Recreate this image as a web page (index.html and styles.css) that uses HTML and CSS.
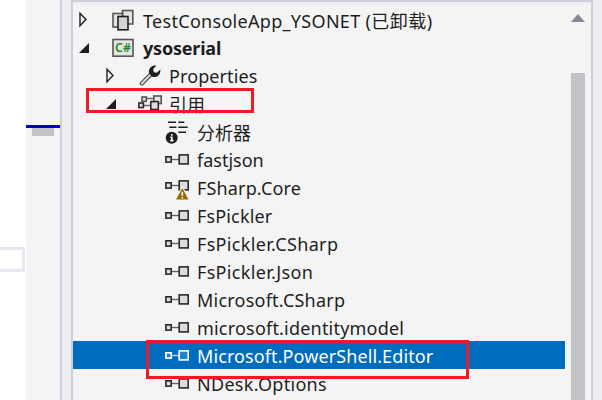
FILE: index.html
```html
<!DOCTYPE html>
<html lang="zh-CN">
<head>
    <meta charset="UTF-8">
    <title>解决方案资源管理器</title>
    <link rel="stylesheet" href="styles.css">
</head>
<body>

    <!-- shared icon -->
    <svg width="0" height="0" class="defs">
        <symbol id="ref" viewBox="0 0 28 28">
            <path class="link" d="M7.5 14.5h8"/>
            <rect class="box" x="1.9" y="11.8" width="5.3" height="5.3"/>
            <rect class="box" x="15.2" y="9.9" width="9" height="9"/>
        </symbol>
    </svg>

    <div class="window">
        <div class="editor"><div class="editor-box"></div></div>
        <div class="strip">
            <div class="caret-line"></div>
            <div class="strip-thumb"></div>
        </div>
        <div class="splitter"></div>

        <div class="panel">
            <div class="tree">
                <div class="row">
                    <svg class="arrow" viewBox="0 0 12 28"><path class="closed" d="M2 8.3v12.5l6-6.2z"/></svg>
                    <svg class="icon" viewBox="0 0 28 28">
                        <rect class="box back" x="12.5" y="5.5" width="10.3" height="13.5"/>
                        <rect class="box back" x="3" y="8.5" width="9.5" height="13.5"/>
                        <rect class="box front" x="8" y="11.5" width="10" height="13.3"/>
                    </svg>
                    <span class="label l-test">TestConsoleApp_YSONET (<span class="cjk">已卸载</span>)</span>
                </div>
                <div class="row">
                    <svg class="arrow" viewBox="0 0 12 28"><path class="open" d="M11 10v10H1z"/></svg>
                    <svg class="icon" viewBox="0 0 28 28">
                        <rect class="box back" x="3" y="6.5" width="20" height="16.7"/>
                        <text class="cs" x="5" y="19.3" textLength="16" lengthAdjust="spacingAndGlyphs">C#</text>
                    </svg>
                    <span class="label l-yso">ysoserial</span>
                </div>
                <div class="row level1">
                    <svg class="arrow" viewBox="0 0 12 28"><path class="closed" d="M2 8.3v12.5l6-6.2z"/></svg>
                    <svg class="icon" viewBox="0 0 28 28">
                        <path class="handle-edge" d="M4.8 22.5L14 13.2"/>
                        <path class="handle" d="M4.8 22.5L14 13.2"/>
                        <path class="head" d="M19.4 4.6a6.3 6.3 0 0 0-7.3 8l3.2 3.2a6.3 6.3 0 0 0 8-7.2l-3.4 3.2-3-.6-.8-3z"/>
                    </svg>
                    <span class="label l-prop">Properties</span>
                </div>
                <div class="row level1">
                    <svg class="arrow" viewBox="0 0 12 28"><path class="open" d="M11 10v10H1z"/></svg>
                    <svg class="icon" viewBox="0 0 28 28">
                        <path class="link" d="M10 9.5h7M7 16.5h7"/>
                        <rect class="box back" x="5" y="8" width="4.3" height="4.3"/>
                        <rect class="box back" x="16.8" y="7" width="7.4" height="7.6"/>
                        <rect class="box" x="1.9" y="14" width="4.5" height="4.6"/>
                        <rect class="box" x="13.8" y="12.6" width="7.5" height="7.9"/>
                    </svg>
                    <span class="label cjk">引用</span>
                </div>
                <div class="row level2">
                    <svg class="icon" viewBox="0 0 28 28">
                        <path class="lines" d="M4 5.2h8M14.3 5.2h6M5.3 10.2h7.2M14.3 10.2h9.4M14.3 15.2h7.7"/>
                        <circle class="dot" cx="7.7" cy="20.7" r="6"/>
                        <path class="info" d="M7.8 17v1.7M6.3 20.2h1.5v3.4M6.2 23.6h3.3"/>
                    </svg>
                    <span class="label cjk">分析器</span>
                </div>
                <div class="row level2">
                    <svg class="icon"><use href="#ref"/></svg>
                    <span class="label l-fast">fastjson</span>
                </div>
                <div class="row level2">
                    <svg class="icon" viewBox="0 0 28 28">
                        <g transform="translate(0 -2)">
                            <path class="link" d="M7.5 14.5h8"/>
                            <rect class="box" x="1.9" y="11.8" width="5.3" height="5.3"/>
                            <rect class="box" x="15.2" y="9.9" width="9" height="9"/>
                        </g>
                        <path class="warn-edge" d="M18.3 14.8l6.4 12H11.9z"/>
                        <path class="warn" d="M18.3 15l6.2 11.6H12.1z"/>
                        <path class="info" d="M18.3 18.7v4M18.3 23.9v1.5"/>
                    </svg>
                    <span class="label l-core">FSharp.Core</span>
                </div>
                <div class="row level2">
                    <svg class="icon"><use href="#ref"/></svg>
                    <span class="label l-fsp">FsPickler</span>
                </div>
                <div class="row level2">
                    <svg class="icon"><use href="#ref"/></svg>
                    <span class="label l-fsc">FsPickler.CSharp</span>
                </div>
                <div class="row level2">
                    <svg class="icon"><use href="#ref"/></svg>
                    <span class="label l-fsj">FsPickler.Json</span>
                </div>
                <div class="row level2">
                    <svg class="icon"><use href="#ref"/></svg>
                    <span class="label l-mcs">Microsoft.CSharp</span>
                </div>
                <div class="row level2">
                    <svg class="icon"><use href="#ref"/></svg>
                    <span class="label l-mid">microsoft.identitymodel</span>
                </div>
                <div class="row level2 selected">
                    <svg class="icon"><use href="#ref"/></svg>
                    <span class="label l-mps">Microsoft.PowerShell.Editor</span>
                </div>
                <div class="row level2">
                    <svg class="icon"><use href="#ref"/></svg>
                    <span class="label l-nd">NDesk.Options</span>
                </div>
            </div>
            <div class="scrollbar">
                <svg class="up" viewBox="0 0 14 8"><path d="M7 0l7 8H0z"/></svg>
                <div class="thumb"></div>
            </div>
        </div>

        <!-- red annotation frames -->
        <div class="mark mark-refs"></div>
        <div class="mark mark-editor"></div>
    </div>

</body>
</html>
```
FILE: styles.css
```css
body {
    margin: 0;
    overflow: hidden;
    background: #eeeef2;
    font-family: "Noto Sans", "Noto Sans CJK SC", sans-serif;
    font-size: 18px;
    color: #1e1e1e;
}

.defs {
    position: absolute;
}

.window {
    position: relative;
    display: flex;
    width: 602px;
    height: 400px;
    overflow: hidden;
}

/* left side */
.editor {
    width: 26px;
    background: #fff;
}

.editor-box {
    box-sizing: border-box;
    width: 25px;
    height: 25px;
    margin-top: 247px;
    border: 3px solid #e9e8f1;
    border-left: none;
}

.strip {
    width: 34px;
    background: #f4f4f4;
}

.caret-line {
    height: 3px;
    margin-top: 125px;
    background: #0000cd;
}

.strip-thumb {
    width: 22px;
    height: 8px;
    margin-left: 6px;
    background: #c2c3c9;
}

.splitter {
    width: 9px;
    border-left: 2px solid #cccedb;
}

/* solution tree */
.panel {
    box-sizing: border-box;
    display: flex;
    width: 522px;
    height: 400px;
    padding-top: 3px;
    border: 2px solid #cccedb;
    border-bottom: none;
}

.tree {
    width: 492px;
    background: #f4f4f4;
}

.row {
    box-sizing: border-box;
    display: flex;
    align-items: center;
    height: 28px;
    padding-left: 5px;
}

.level1 {
    padding-left: 32px;
}

.level2 {
    padding-left: 91px;
}

.selected {
    background: #006cbe;
    color: #fff;
}

.arrow {
    width: 12px;
    height: 28px;
    margin-right: 20px;
}

.icon {
    width: 28px;
    height: 28px;
    margin-right: 5px;
    overflow: visible;
    --line: #2a2a2a;
    --fill: #dcdcdc;
    --link: #666;
}

.selected .icon {
    --line: #fff;
    --fill: #2680c8;
    --link: #b5d4ec;
}

.level1 .icon {
    margin-right: 4px;
}

.label {
    padding-top: 2px;
    line-height: 26px;
    white-space: nowrap;
}

.cjk {
    font-family: "Noto Sans CJK SC", sans-serif;
    letter-spacing: 0;
}

/* label widths */
.l-test {
    letter-spacing: 0.3px;
}

.l-test .cjk {
    letter-spacing: 0.5px;
}

.l-yso {
    font-weight: bold;
    letter-spacing: -0.2px;
}

.l-prop,
.l-mps {
    letter-spacing: 0.1px;
}

.l-core,
.l-fsp {
    letter-spacing: 0.15px;
}

.l-mid {
    letter-spacing: 0.2px;
}

.l-mcs {
    letter-spacing: 0.22px;
}

.l-nd {
    letter-spacing: 0.3px;
}

.l-fsc,
.l-fsj {
    letter-spacing: 0.33px;
}

/* icon parts */
.closed {
    fill: none;
    stroke: #1e1e1e;
    stroke-width: 1.4;
}

.open,
.dot,
.head {
    fill: #1e1e1e;
}

.box {
    fill: var(--fill);
    stroke: var(--line);
    stroke-width: 1.6;
}

.back {
    fill: #e4e4e4;
    stroke: #555;
}

.front {
    fill: #d4d4d4;
    stroke: #1e1e1e;
}

.link {
    stroke: var(--link);
    stroke-width: 1.4;
}

.cs {
    font-family: "Noto Sans", sans-serif;
    font-size: 12.5px;
    font-weight: 600;
    fill: #228b22;
}

.handle-edge {
    stroke: #555;
    stroke-width: 4.4;
    stroke-linecap: round;
}

.handle {
    stroke: #dcdcdc;
    stroke-width: 1.8;
    stroke-linecap: round;
}

.lines {
    stroke: #1e1e1e;
    stroke-width: 1.5;
}

.info {
    fill: none;
    stroke: #fff;
    stroke-width: 1.6;
}

.warn {
    fill: #966900;
}

.warn-edge {
    fill: none;
    stroke: #f4f4f4;
    stroke-width: 2;
}

/* scrollbar */
.scrollbar {
    width: 26px;
    background: #f4f4f4;
}

.up {
    display: block;
    width: 14px;
    height: 8px;
    margin: 9px 0 0 6px;
    fill: #868999;
}

.thumb {
    width: 14px;
    height: 327px;
    margin: 51px 0 0 6px;
    background: #c2c3c9;
}

/* annotations */
.mark {
    position: absolute;
    box-sizing: border-box;
    border: 3px solid #ed1c24;
}

.mark-refs {
    left: 86px;
    top: 88px;
    width: 168px;
    height: 25px;
}

.mark-editor {
    left: 146px;
    top: 340px;
    width: 323px;
    height: 39px;
}
```
